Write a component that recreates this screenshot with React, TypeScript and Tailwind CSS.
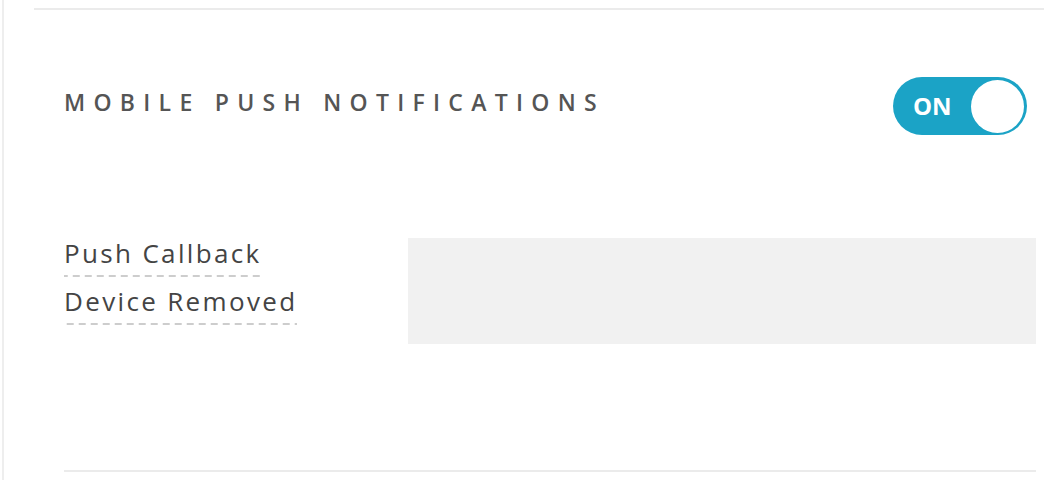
import React from 'react';

const events = ['Push Callback', 'Device Removed'];

export default function App() {
  return (
    <div className="w-[1044px] h-[480px] bg-white overflow-hidden pl-[2px] font-['Open_Sans',sans-serif]">
      <div className="h-full border-l-2 border-[#eeeeee] pl-[30px] pt-[8px]">
        <div className="border-t-2 border-[#ebebeb]" />

        <div className="pl-[30px] pr-[8px]">
          {/* Section header */}
          <div className="flex items-start justify-between mt-[67px]">
            <h2 className="mt-[10px] text-[23px] leading-[30px] font-semibold tracking-[0.36em] text-[#555555] uppercase">
              Mobile Push Notifications
            </h2>
            <button className="mr-[9px] w-[134px] h-[58px] rounded-full bg-[#1ba3c6] flex items-center justify-between pl-[20px] pr-[3px]">
              <span className="text-[24px] font-bold text-white">ON</span>
              <span className="w-[53px] h-[53px] rounded-full bg-white" />
            </button>
          </div>

          {/* Events */}
          <div className="flex items-start mt-[103px]">
            <div className="w-[344px] flex flex-col items-start gap-[6px] -mt-[3px]">
              {events.map((e) => (
                <span
                  key={e}
                  className="text-[26px] leading-[36px] tracking-[0.09em] text-[#444444] pb-[6px] bg-[linear-gradient(to_right,#cdcdcd_7px,transparent_7px)] bg-[length:12px_2px] bg-repeat-x bg-bottom"
                >
                  {e}
                </span>
              ))}
            </div>
            <div className="flex-1 h-[106px] bg-[#f1f1f1]" />
          </div>

          <div className="mt-[126px] border-t-2 border-[#ebebeb]" />
        </div>
      </div>
    </div>
  );
}
